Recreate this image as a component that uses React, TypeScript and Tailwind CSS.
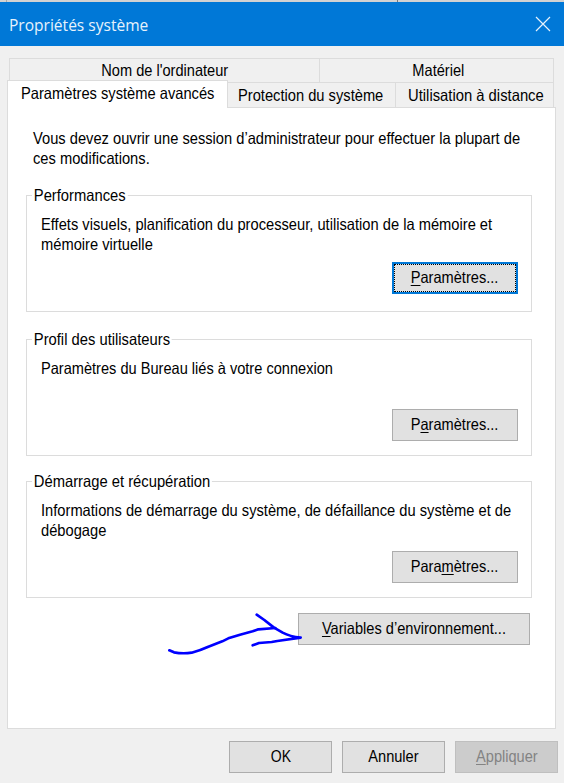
import type { ReactNode } from "react";

function Text({
  children,
  className = "origin-left -translate-y-px scale-x-[.89]",
}: {
  children: ReactNode;
  className?: string;
}) {
  return <span className={`block whitespace-nowrap ${className}`}>{children}</span>;
}

function Label({ children }: { children: ReactNode }) {
  return <Text className="origin-center -translate-y-px scale-x-[.885]">{children}</Text>;
}

function Button({
  children,
  className = "",
  tone = "border border-[#adadad] bg-[#e1e1e1]",
}: {
  children: ReactNode;
  className?: string;
  tone?: string;
}) {
  return (
    <button className={`flex h-8 shrink-0 items-center justify-center ${tone} ${className}`}>
      {children}
    </button>
  );
}

function Key({ children }: { children: ReactNode }) {
  return <span className="underline decoration-1 underline-offset-[1.5px]">{children}</span>;
}

function Group({
  title,
  lines,
  button,
  focused = false,
  className = "",
}: {
  title: string;
  lines: ReactNode;
  button: ReactNode;
  focused?: boolean;
  className?: string;
}) {
  return (
    <section className={`flex h-[117px] w-[506px] flex-col border border-[#dcdcdc] ${className}`}>
      <h2 className="-mt-[11px] ml-[5px] h-5 origin-left scale-x-[.895] self-start bg-white px-[2px] leading-5 whitespace-nowrap">
        {title}
      </h2>
      <div className="mt-[10px] ml-[14px] h-10 leading-5">{lines}</div>
      {focused ? (
        <Button
          className="mt-[7px] mr-[13px] w-[126px] self-end"
          tone="border-2 border-[#0078d7] bg-[#e1e1e1]"
        >
          <span className="flex h-full w-full items-center justify-center border border-dotted border-black">
            {button}
          </span>
        </Button>
      ) : (
        <Button className="mt-[10px] mr-[13px] w-[126px] self-end">{button}</Button>
      )}
    </section>
  );
}

export default function App() {
  return (
    <main className="relative flex h-[783px] w-[564px] flex-col overflow-hidden bg-[#f0f0f0] font-['Liberation_Sans',Arial,sans-serif] text-[16.5px] text-black">
      <div className="flex h-[2px] shrink-0 bg-[#d2d2d2]">
        <i className="ml-[6px] w-px bg-[#aaa]" />
        <i className="ml-[390px] w-px bg-[#777]" />
      </div>
      <header className="flex h-11 shrink-0 items-center justify-between bg-[#0078d7] pr-[13px] pl-[9px] font-['Open_Sans',sans-serif] text-[16px] text-[#e6f2fc]">
        <Text className="mt-[2px] origin-left scale-x-[.972]">Propriétés système</Text>
        <svg width="16" height="16" viewBox="0 0 16 16" fill="none" stroke="#e6f2fc" strokeWidth="1.2">
          <path d="M1 1 15 15M15 1 1 15" />
        </svg>
      </header>
      <nav className="mt-3 ml-[9px] flex w-[545px] shrink-0 flex-col">
        <div className="flex h-6 border border-b-0 border-[#dcdcdc]">
          <div className="flex w-[310px] items-center justify-center border-r border-[#dcdcdc] pt-px">
            <Label>Nom de l'ordinateur</Label>
          </div>
          <div className="flex flex-1 items-center justify-center pt-px pl-[3px]">
            <Label>Matériel</Label>
          </div>
        </div>
        <div className="flex h-[25px] border-r border-[#dcdcdc]">
          <div className="z-10 -mt-[2px] -ml-[2px] flex h-7 w-[221px] shrink-0 items-center border border-b-0 border-[#dcdcdc] bg-white pl-[13px]">
            <Text>Paramètres système avancés</Text>
          </div>
          <div className="flex w-[168px] shrink-0 items-center border-t border-r border-[#dcdcdc] pt-[2px] pl-[10px]">
            <Text>Protection du système</Text>
          </div>
          <div className="flex min-w-0 flex-1 items-center border-t border-[#dcdcdc] pt-[2px] pl-3">
            <Text className="origin-left -translate-y-px scale-x-[.897]">Utilisation à distance</Text>
          </div>
        </div>
      </nav>
      <div className="ml-[7px] flex h-[622px] w-[549px] shrink-0 flex-col border border-[#dcdcdc] bg-white pl-[18px]">
        <div className="mt-[21px] ml-[7px] h-10 leading-5">
          <Text>Vous devez ouvrir une session d’administrateur pour effectuer la plupart de</Text>
          <Text>ces modifications.</Text>
        </div>
        <Group
          className="mt-[26px]"
          title="Performances"
          focused
          lines={
            <>
              <Text>Effets visuels, planification du processeur, utilisation de la mémoire et</Text>
              <Text>mémoire virtuelle</Text>
            </>
          }
          button={<Label><Key>P</Key>aramètres...</Label>}
        />
        <Group
          className="mt-[27px]"
          title="Profil des utilisateurs"
          lines={
            <Text className="origin-left -translate-y-px scale-x-[.884]">
              Paramètres du Bureau liés à votre connexion
            </Text>
          }
          button={<Label>P<Key>a</Key>ramètres...</Label>}
        />
        <Group
          className="mt-[25px]"
          title="Démarrage et récupération"
          lines={
            <>
              <Text>Informations de démarrage du système, de défaillance du système et de</Text>
              <Text>débogage</Text>
            </>
          }
          button={<Label>Para<Key>m</Key>ètres...</Label>}
        />
        <Button className="mt-[15px] ml-[272px] w-[232px] pr-px">
          <Label><Key>V</Key>ariables d’environnement...</Label>
        </Button>
      </div>
      <footer className="mt-3 mr-[6px] flex shrink-0 justify-end gap-[10px]">
        <Button className="w-[103px]">
          <Text className="origin-center -translate-y-px scale-x-[.85]">OK</Text>
        </Button>
        <Button className="w-[103px]"><Label>Annuler</Label></Button>
        <Button className="w-[103px]" tone="border border-[#bfbfbf] bg-[#cccccc] text-[#838383]">
          <Label><Key>A</Key>ppliquer</Label>
        </Button>
      </footer>
      {/* Hand-drawn arrow laid over the dialog */}
      <svg
        className="absolute top-[600px] left-[150px]"
        width="200"
        height="70"
        viewBox="0 0 600 210"
        fill="none"
        stroke="#0000ff"
        strokeWidth="8"
        strokeLinecap="round"
        strokeLinejoin="round"
      >
        <path d="M58 151 72 157Q98 162 125 158 153 150 175 140L217 124 235 115 270 104 308 94 325 88 376 84" />
        <path d="M320 44 343 60 372 83 398 98Q420 110 452 113L382 123 365 126 327 129 308 136" />
      </svg>
    </main>
  );
}
